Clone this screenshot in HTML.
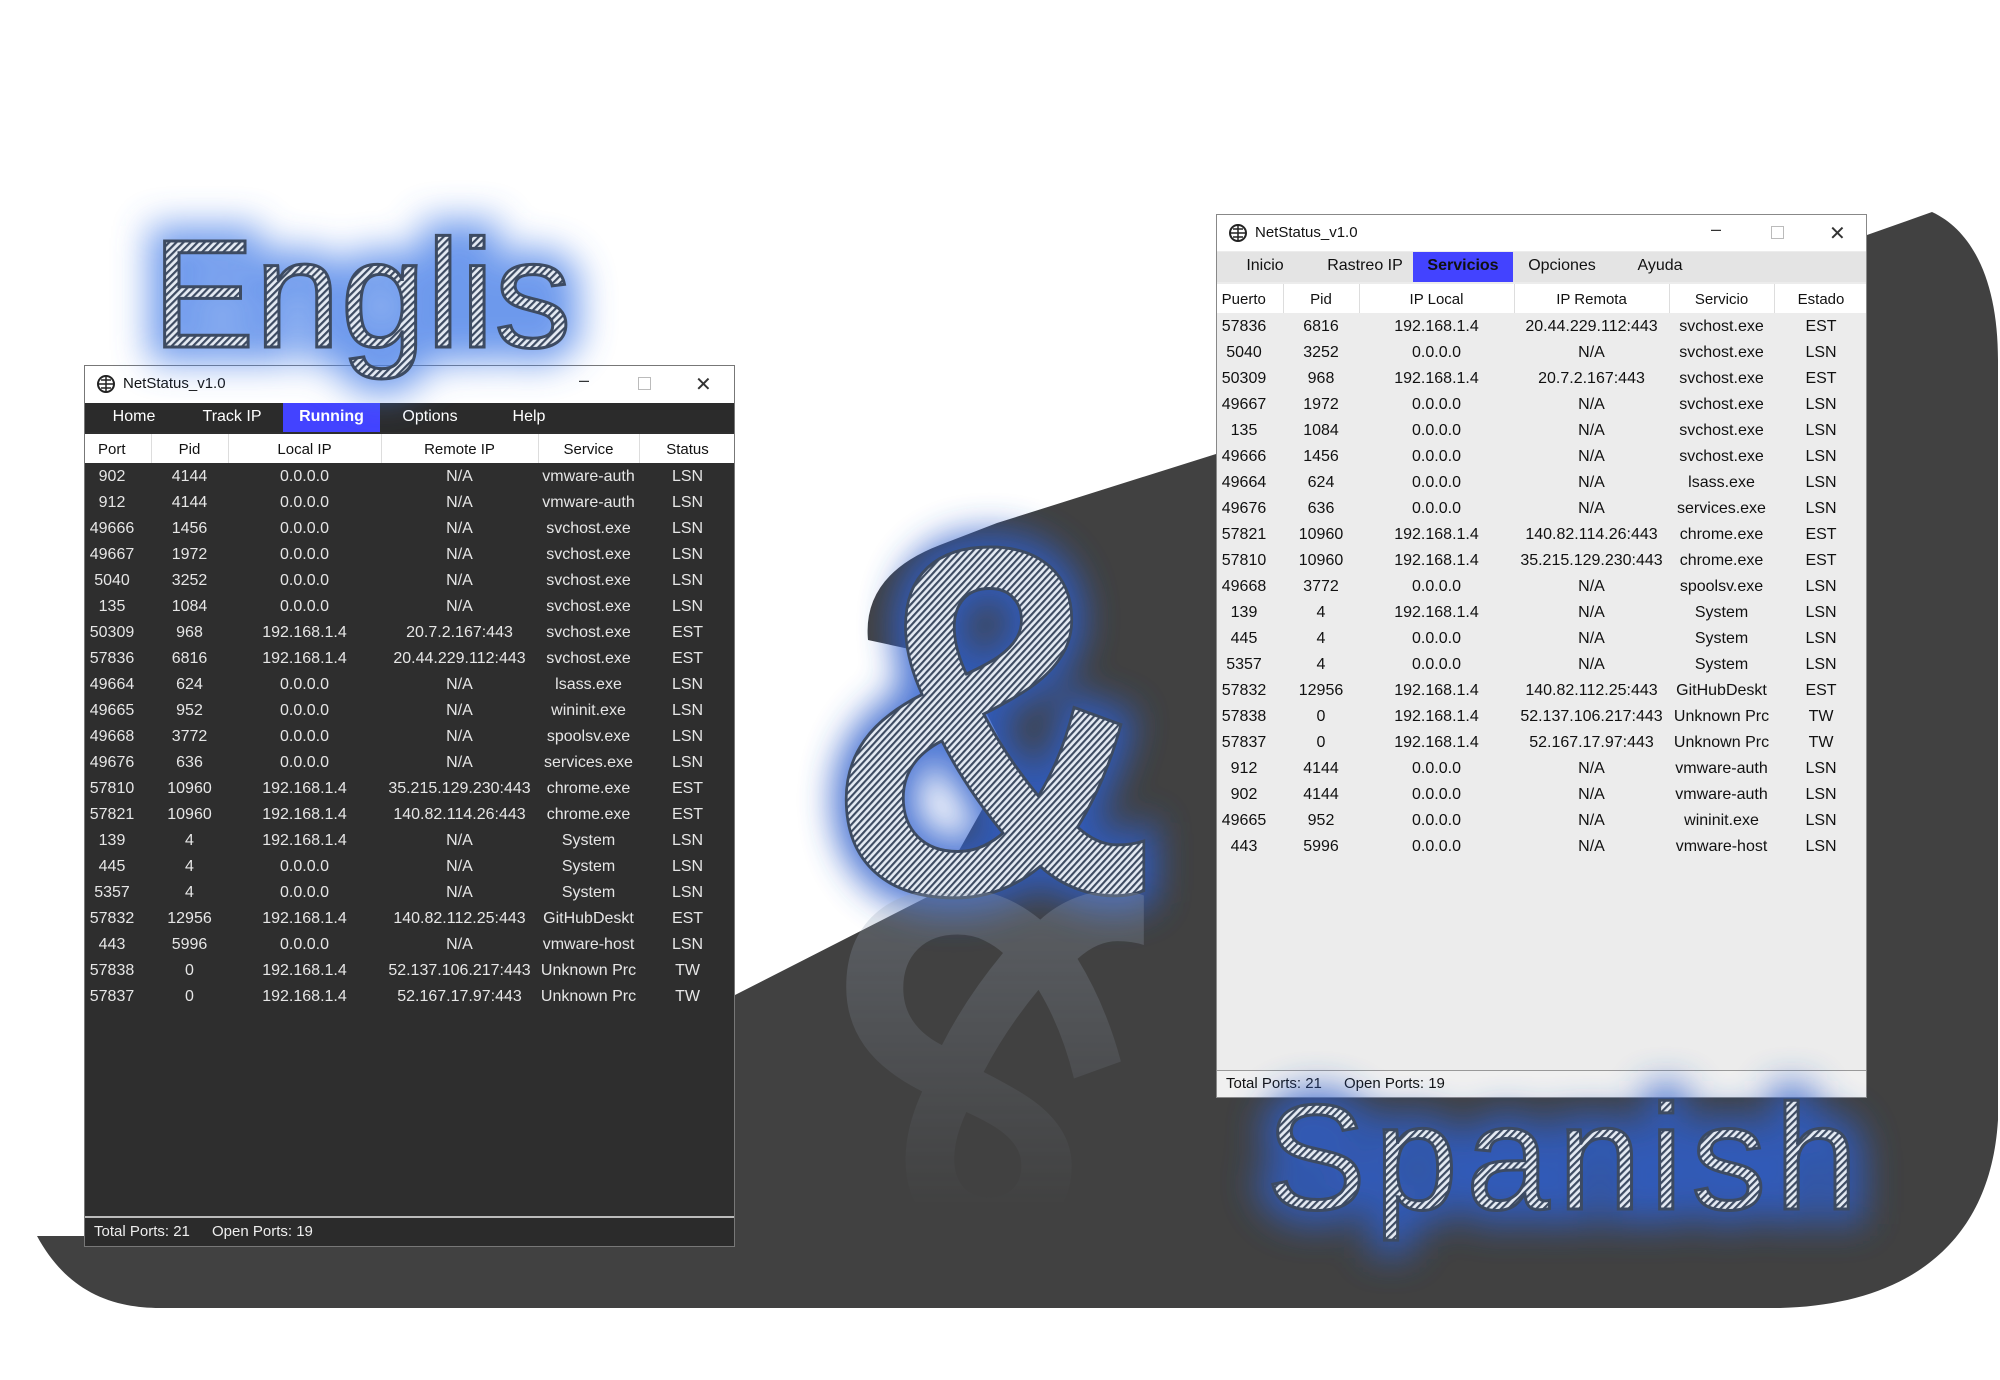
<!DOCTYPE html>
<html><head><meta charset="utf-8"><style>
*{margin:0;padding:0;box-sizing:border-box}
body{width:2000px;height:1380px;background:#fff;position:relative;overflow:hidden;font-family:"Liberation Sans",sans-serif}
.win{position:absolute;overflow:hidden}
.title{position:absolute;left:0;right:0;top:0;background:#fff;font-size:15px;color:#111}
.title .t{position:absolute;left:38px;top:9px}
.title svg.ic{position:absolute;left:11px;top:8px}
.ctl{position:absolute;top:0;font-size:18px;color:#333}
.menu{position:absolute;left:0;right:0;font-size:16px}
.menu span{position:absolute;top:5px;transform:translateX(-50%)}
.menu .sel{top:0;bottom:0;transform:none;background:#4343ff;font-weight:bold;text-align:center;padding-top:5px}
table{position:absolute;left:0;border-collapse:collapse;table-layout:fixed;font-size:16px}
td,th{text-align:center;height:26px;white-space:nowrap;overflow:hidden;padding:0;padding-top:2px}
th{font-weight:normal;font-size:15px;height:29px;background:#fff;color:#111;border-right:1px solid #ddd}
td:first-child,th:first-child{padding-right:12px}
.foot{position:absolute;left:0;right:0;bottom:0;font-size:15px}
.foot span{position:absolute;top:5px}
</style></head><body>
<svg width="2000" height="1380" style="position:absolute;left:0;top:0">
<path d="M37,1236 L100,1236 L735,995 L935,893 L1010,760 L960,660 L868,640 Q862,575 940,545 L997,523 L1216,454 Q1600,330 1932,212 C1975,232 1998,285 1998,360 L1998,1120 C1990,1250 1900,1305 1780,1308 L160,1308 C100,1308 62,1282 37,1236 Z" fill="#414141"/>
</svg>

<!-- left window -->
<div class="win" style="left:84px;top:365px;width:651px;height:882px;background:#2e2e2e;border:1px solid #777">
 <div class="title" style="height:37px">
  <svg class="ic" width="20" height="20" viewBox="0 0 20 20"><circle cx="10" cy="10" r="8" fill="none" stroke="#222" stroke-width="2"/><path d="M2,10H18M10,2V18M5,6H15M5,14H15" stroke="#222" stroke-width="1.5"/></svg>
  <span class="t">NetStatus_v1.0</span>
  <span class="ctl" style="left:494px;top:4px">–</span>
  <span style="position:absolute;left:553px;top:11px;width:13px;height:13px;border:1px solid #bbb"></span>
  <span class="ctl" style="left:610px;top:6px;font-size:20px">✕</span>
 </div>
 <div class="menu" style="top:37px;height:29px;background:#2b2b2b;color:#fff">
  <span style="left:49px">Home</span><span style="left:147px">Track IP</span>
  <span class="sel" style="left:198px;width:97px">Running</span>
  <span style="left:345px">Options</span><span style="left:444px">Help</span>
 </div>
 <table style="top:68px;width:651px;color:#e6e6e6">
 <colgroup><col style="width:66px"><col style="width:77px"><col style="width:153px"><col style="width:157px"><col style="width:101px"><col style="width:97px"></colgroup>
 <tr><th>Port</th><th>Pid</th><th>Local IP</th><th>Remote IP</th><th>Service</th><th>Status</th></tr>
 <tr><td>902</td><td>4144</td><td>0.0.0.0</td><td>N/A</td><td>vmware-auth</td><td>LSN</td></tr>
 <tr><td>912</td><td>4144</td><td>0.0.0.0</td><td>N/A</td><td>vmware-auth</td><td>LSN</td></tr>
 <tr><td>49666</td><td>1456</td><td>0.0.0.0</td><td>N/A</td><td>svchost.exe</td><td>LSN</td></tr>
 <tr><td>49667</td><td>1972</td><td>0.0.0.0</td><td>N/A</td><td>svchost.exe</td><td>LSN</td></tr>
 <tr><td>5040</td><td>3252</td><td>0.0.0.0</td><td>N/A</td><td>svchost.exe</td><td>LSN</td></tr>
 <tr><td>135</td><td>1084</td><td>0.0.0.0</td><td>N/A</td><td>svchost.exe</td><td>LSN</td></tr>
 <tr><td>50309</td><td>968</td><td>192.168.1.4</td><td>20.7.2.167:443</td><td>svchost.exe</td><td>EST</td></tr>
 <tr><td>57836</td><td>6816</td><td>192.168.1.4</td><td>20.44.229.112:443</td><td>svchost.exe</td><td>EST</td></tr>
 <tr><td>49664</td><td>624</td><td>0.0.0.0</td><td>N/A</td><td>lsass.exe</td><td>LSN</td></tr>
 <tr><td>49665</td><td>952</td><td>0.0.0.0</td><td>N/A</td><td>wininit.exe</td><td>LSN</td></tr>
 <tr><td>49668</td><td>3772</td><td>0.0.0.0</td><td>N/A</td><td>spoolsv.exe</td><td>LSN</td></tr>
 <tr><td>49676</td><td>636</td><td>0.0.0.0</td><td>N/A</td><td>services.exe</td><td>LSN</td></tr>
 <tr><td>57810</td><td>10960</td><td>192.168.1.4</td><td>35.215.129.230:443</td><td>chrome.exe</td><td>EST</td></tr>
 <tr><td>57821</td><td>10960</td><td>192.168.1.4</td><td>140.82.114.26:443</td><td>chrome.exe</td><td>EST</td></tr>
 <tr><td>139</td><td>4</td><td>192.168.1.4</td><td>N/A</td><td>System</td><td>LSN</td></tr>
 <tr><td>445</td><td>4</td><td>0.0.0.0</td><td>N/A</td><td>System</td><td>LSN</td></tr>
 <tr><td>5357</td><td>4</td><td>0.0.0.0</td><td>N/A</td><td>System</td><td>LSN</td></tr>
 <tr><td>57832</td><td>12956</td><td>192.168.1.4</td><td>140.82.112.25:443</td><td>GitHubDeskt</td><td>EST</td></tr>
 <tr><td>443</td><td>5996</td><td>0.0.0.0</td><td>N/A</td><td>vmware-host</td><td>LSN</td></tr>
 <tr><td>57838</td><td>0</td><td>192.168.1.4</td><td>52.137.106.217:443</td><td>Unknown Prc</td><td>TW</td></tr>
 <tr><td>57837</td><td>0</td><td>192.168.1.4</td><td>52.167.17.97:443</td><td>Unknown Prc</td><td>TW</td></tr>
 </table>
 <div class="foot" style="height:30px;background:#2b2b2b;color:#eee;border-top:2px solid #bbb"><span style="left:9px">Total Ports: 21</span><span style="left:127px">Open Ports: 19</span></div>
</div>

<!-- right window -->
<div class="win" style="left:1216px;top:214px;width:651px;height:884px;background:#ececec;border:1px solid #888">
 <div class="title" style="height:36px">
  <svg class="ic" width="20" height="20" viewBox="0 0 20 20"><circle cx="10" cy="10" r="8" fill="none" stroke="#222" stroke-width="2"/><path d="M2,10H18M10,2V18M5,6H15M5,14H15" stroke="#222" stroke-width="1.5"/></svg>
  <span class="t">NetStatus_v1.0</span>
  <span class="ctl" style="left:494px;top:4px">–</span>
  <span style="position:absolute;left:554px;top:11px;width:13px;height:13px;border:1px solid #bbb"></span>
  <span class="ctl" style="left:612px;top:6px;font-size:20px">✕</span>
 </div>
 <div class="menu" style="top:37px;height:30px;background:#e4e4e4;color:#111">
  <span style="left:48px">Inicio</span><span style="left:148px">Rastreo IP</span>
  <span class="sel" style="left:196px;width:100px">Servicios</span>
  <span style="left:345px">Opciones</span><span style="left:443px">Ayuda</span>
 </div>
 <table style="top:69px;width:651px;color:#111">
 <colgroup><col style="width:66px"><col style="width:76px"><col style="width:155px"><col style="width:155px"><col style="width:105px"><col style="width:94px"></colgroup>
 <tr><th>Puerto</th><th>Pid</th><th>IP Local</th><th>IP Remota</th><th>Servicio</th><th>Estado</th></tr>
 <tr><td>57836</td><td>6816</td><td>192.168.1.4</td><td>20.44.229.112:443</td><td>svchost.exe</td><td>EST</td></tr>
 <tr><td>5040</td><td>3252</td><td>0.0.0.0</td><td>N/A</td><td>svchost.exe</td><td>LSN</td></tr>
 <tr><td>50309</td><td>968</td><td>192.168.1.4</td><td>20.7.2.167:443</td><td>svchost.exe</td><td>EST</td></tr>
 <tr><td>49667</td><td>1972</td><td>0.0.0.0</td><td>N/A</td><td>svchost.exe</td><td>LSN</td></tr>
 <tr><td>135</td><td>1084</td><td>0.0.0.0</td><td>N/A</td><td>svchost.exe</td><td>LSN</td></tr>
 <tr><td>49666</td><td>1456</td><td>0.0.0.0</td><td>N/A</td><td>svchost.exe</td><td>LSN</td></tr>
 <tr><td>49664</td><td>624</td><td>0.0.0.0</td><td>N/A</td><td>lsass.exe</td><td>LSN</td></tr>
 <tr><td>49676</td><td>636</td><td>0.0.0.0</td><td>N/A</td><td>services.exe</td><td>LSN</td></tr>
 <tr><td>57821</td><td>10960</td><td>192.168.1.4</td><td>140.82.114.26:443</td><td>chrome.exe</td><td>EST</td></tr>
 <tr><td>57810</td><td>10960</td><td>192.168.1.4</td><td>35.215.129.230:443</td><td>chrome.exe</td><td>EST</td></tr>
 <tr><td>49668</td><td>3772</td><td>0.0.0.0</td><td>N/A</td><td>spoolsv.exe</td><td>LSN</td></tr>
 <tr><td>139</td><td>4</td><td>192.168.1.4</td><td>N/A</td><td>System</td><td>LSN</td></tr>
 <tr><td>445</td><td>4</td><td>0.0.0.0</td><td>N/A</td><td>System</td><td>LSN</td></tr>
 <tr><td>5357</td><td>4</td><td>0.0.0.0</td><td>N/A</td><td>System</td><td>LSN</td></tr>
 <tr><td>57832</td><td>12956</td><td>192.168.1.4</td><td>140.82.112.25:443</td><td>GitHubDeskt</td><td>EST</td></tr>
 <tr><td>57838</td><td>0</td><td>192.168.1.4</td><td>52.137.106.217:443</td><td>Unknown Prc</td><td>TW</td></tr>
 <tr><td>57837</td><td>0</td><td>192.168.1.4</td><td>52.167.17.97:443</td><td>Unknown Prc</td><td>TW</td></tr>
 <tr><td>912</td><td>4144</td><td>0.0.0.0</td><td>N/A</td><td>vmware-auth</td><td>LSN</td></tr>
 <tr><td>902</td><td>4144</td><td>0.0.0.0</td><td>N/A</td><td>vmware-auth</td><td>LSN</td></tr>
 <tr><td>49665</td><td>952</td><td>0.0.0.0</td><td>N/A</td><td>wininit.exe</td><td>LSN</td></tr>
 <tr><td>443</td><td>5996</td><td>0.0.0.0</td><td>N/A</td><td>vmware-host</td><td>LSN</td></tr>
 </table>
 <div class="foot" style="height:27px;background:#f0f0f0;color:#111;border-top:1px solid #999"><span style="left:9px;top:4px">Total Ports: 21</span><span style="left:127px;top:4px">Open Ports: 19</span></div>
</div>

<svg width="2000" height="1380" style="position:absolute;left:0;top:0">
<defs>
<pattern id="h" width="5" height="5" patternUnits="userSpaceOnUse" patternTransform="rotate(45)">
<rect width="5" height="5" fill="#e4eaf3"/><rect width="2.2" height="5" fill="#3d4b62"/></pattern>
<filter id="g" x="-40%" y="-40%" width="180%" height="180%"><feGaussianBlur stdDeviation="18"/></filter>
<linearGradient id="fade" x1="0" y1="0" x2="0" y2="1"><stop offset="0" stop-color="#fff" stop-opacity="0.3"/><stop offset="1" stop-color="#fff" stop-opacity="0"/></linearGradient>
<mask id="m"><rect x="800" y="893" width="400" height="320" fill="url(#fade)"/></mask>
</defs>
<g font-family="Liberation Sans, sans-serif">
<text x="152" y="347" font-size="154" fill="#4a80e8" opacity="0.8" filter="url(#g)" stroke="#4a80e8" stroke-width="30">Englis</text>
<text x="152" y="347" font-size="154" fill="url(#h)" stroke="#3d4b62" stroke-width="3">Englis</text>
<text x="1266" y="1209" font-size="150" textLength="592" fill="#2f5fcc" opacity="0.85" filter="url(#g)" stroke="#2f5fcc" stroke-width="30">Spanish</text>
<text x="1266" y="1209" font-size="150" textLength="592" fill="url(#h)" stroke="#3d4b62" stroke-width="3">Spanish</text>
<g transform="translate(826,893) scale(0.92,1)">
<text x="0" y="0" font-size="500" font-weight="bold" fill="#2f5fcc" opacity="0.85" filter="url(#g)" stroke="#2f5fcc" stroke-width="30">&amp;</text>
<text x="0" y="0" font-size="500" font-weight="bold" fill="url(#h)" stroke="#3d4b62" stroke-width="3">&amp;</text>
</g>
<g mask="url(#m)"><g transform="translate(826,893) scale(0.92,-1)">
<text x="0" y="0" font-size="500" font-weight="bold" fill="#9aa6b8">&amp;</text></g></g>
</g>
</svg>
</body></html>
